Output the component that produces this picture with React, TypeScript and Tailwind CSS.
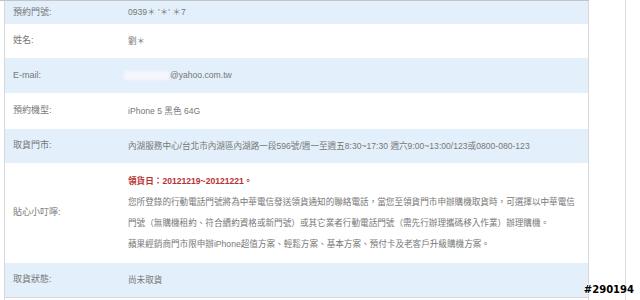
import React from "react";

const rows: { label: string; h: string; blue: boolean; value: React.ReactNode }[] = [
  { label: "預約門號:", h: "h-[23px]", blue: true, value: <span>0939＊ &apos;＊&apos; ＊7</span> },
  { label: "姓名:", h: "h-[34px]", blue: false, value: <span>劉＊</span> },
  {
    label: "E-mail:",
    h: "h-[35px]",
    blue: true,
    value: (
      <span className="-ml-[4px] flex items-center">
        <span className="mr-[1px] h-[9px] w-[45px] rounded-[3px] bg-[#f6f6fc] blur-[1px]" />
        @yahoo.com.tw
      </span>
    ),
  },
  { label: "預約機型:", h: "h-[36px]", blue: false, value: <span>iPhone 5 黑色 64G</span> },
  {
    label: "取貨門市:",
    h: "h-[34px]",
    blue: true,
    value: <span>內湖服務中心/台北市內湖區內湖路一段596號/週一至週五8:30~17:30 週六9:00~13:00/123或0800-080-123</span>,
  },
];

export default function App() {
  return (
    <div
      className="relative h-[300px] w-[640px] overflow-hidden bg-white text-[8.6px] whitespace-nowrap text-[#777]"
      style={{ fontFamily: '"Liberation Sans", "Noto Sans CJK TC", sans-serif' }}
    >
      <div className="flex h-full">
        <div className="ml-[4px] flex w-[585px] shrink-0 flex-col border-x border-t border-[#d8d8d8]">
          {rows.map((r) => (
            <div key={r.label} className={`flex items-center ${r.h} ${r.blue ? "bg-[#e3f0fc]" : "bg-white"}`}>
              <div className="w-[123px] shrink-0 pl-[8px] text-[9px]">{r.label}</div>
              <div>{r.value}</div>
            </div>
          ))}
          <div className="flex h-[100px] items-center bg-white">
            <div className="w-[123px] shrink-0 pl-[8px] text-[9px]">貼心小叮嚀:</div>
            <div className="flex flex-col leading-[21px]">
              <span className="font-bold text-[#b83232]">領貨日：20121219~20121221。</span>
              <span>您所登錄的行動電話門號將為中華電信發送領貨通知的聯絡電話，當您至領貨門市申辦購機取貨時，可選擇以中華電信</span>
              <span>門號（無購機租約、符合續約資格或新門號）或其它業者行動電話門號（需先行辦理攜碼移入作業）辦理購機。</span>
              <span>蘋果經銷商門市限申辦iPhone超值方案、輕鬆方案、基本方案、預付卡及老客戶升級購機方案。</span>
            </div>
          </div>
          <div className="flex h-[34px] items-center bg-[#e3f0fc]">
            <div className="w-[123px] shrink-0 pl-[8px] text-[9px]">取貨狀態:</div>
            <div>尚未取貨</div>
          </div>
          <div className="flex-1 border-t border-[#d8d8d8] bg-white" />
        </div>
        <div className="ml-[36px] w-px shrink-0 bg-[#dcdcdc]" />
      </div>
      <div className="absolute top-0 left-0 h-px w-[589px] bg-[#c4c4c4]" />
      <div
        className="absolute right-[6px] bottom-[3px] text-[10px] font-bold text-black"
        style={{ fontFamily: '"DejaVu Sans", sans-serif', textShadow: "1px 0 #fff, -1px 0 #fff, 0 1px #fff, 0 -1px #fff" }}
      >
        #290194
      </div>
    </div>
  );
}
